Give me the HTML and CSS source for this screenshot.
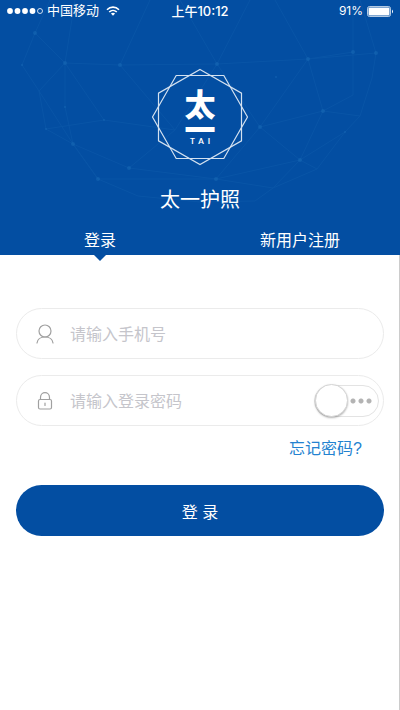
FILE: index.html
```html
<!DOCTYPE html>
<html lang="zh-CN">

<head>
     <meta charset="UTF-8">
     <meta name="viewport" content="width=device-width, initial-scale=1.0">
     <title>太一护照</title>
     <link rel="stylesheet" href="styles.css">
</head>

<body>
     <header class="hero">
          <!-- network globe -->
          <svg class="globe" viewBox="0 0 400 255" preserveAspectRatio="xMidYMid slice" aria-hidden="true">
               <g fill="none" stroke="#1d6db8" stroke-width="1" opacity=".22">
                    <path d="M50 0L35 33L22 65L39 91L46 129L73 144L98 179L138 196L200 202L255 201L273 188L317 169L345 132L360 116L372 78L376 53L360 0" />
                    <path d="M35 33L65 63L120 65L217 64L308 59L376 53M65 63L39 91L73 144L98 179M65 63L104 120L46 129M65 63L75 0M150 0L120 65L175 130M65 63L65 107L73 144L129 168" />
                    <path d="M175 130L217 64L260 127L308 59L323 111L260 127L216 179L129 168L175 130M323 111L360 116M308 59L275 0M308 59L353 52L353 95L323 111L300 160L345 132" />
                    <path d="M98 179L216 179L273 188L300 160L317 169M180 0L217 64L250 0M260 127L300 160L216 179M104 120L175 130M353 52L353 0" />
               </g>
               <g fill="#2378c0" opacity=".35">
                    <circle cx="35" cy="33" r="2" />
                    <circle cx="65" cy="63" r="2" />
                    <circle cx="22" cy="65" r="1" />
                    <circle cx="120" cy="65" r="2" />
                    <circle cx="217" cy="64" r="2" />
                    <circle cx="308" cy="59" r="2" />
                    <circle cx="353" cy="52" r="2" />
                    <circle cx="376" cy="53" r="2" />
                    <circle cx="65" cy="107" r="1" />
                    <circle cx="104" cy="120" r="1" />
                    <circle cx="129" cy="168" r="2" />
                    <circle cx="73" cy="144" r="2" />
                    <circle cx="98" cy="179" r="2" />
                    <circle cx="323" cy="111" r="2" />
                    <circle cx="260" cy="127" r="2" />
                    <circle cx="300" cy="160" r="2" />
                    <circle cx="216" cy="179" r="2" />
                    <circle cx="46" cy="129" r="1" />
                    <circle cx="345" cy="132" r="1" />
                    <circle cx="276" cy="77" r="1" />
               </g>
          </svg>

          <div class="status">
               <div class="status-left">
                    <svg class="signal" width="37" height="8" viewBox="0 0 37 8" aria-hidden="true">
                         <g fill="#fff">
                              <circle cx="4" cy="4" r="2.9" />
                              <circle cx="11.500" cy="4" r="2.9" />
                              <circle cx="19" cy="4" r="2.9" />
                              <circle cx="26.500" cy="4" r="2.9" />
                         </g>
                         <circle cx="34" cy="4" r="2.5" fill="none" stroke="#fff" stroke-width=".8" />
                    </svg>
                    <span>中国移动</span>
                    <svg class="wifi" width="14" height="10" viewBox="0 0 14 10" aria-hidden="true">
                         <path d="M1 3.700C4.400 .3 9.600 .3 13 3.700M3.200 6C5.400 3.900 8.600 3.900 10.800 6" fill="none" stroke="#fff" stroke-width="1.600" />
                         <path d="M4.900 7.600Q7 5.800 9.100 7.600L7 9.800Z" fill="#fff" />
                    </svg>
               </div>
               <div class="status-time">上午10:12</div>
               <div class="status-right">
                    <span>91%</span>
                    <svg width="27" height="11" viewBox="0 0 27 11" aria-hidden="true">
                         <rect x=".5" y=".5" width="23" height="10" rx="2" fill="none" stroke="#fff" stroke-opacity=".7" />
                         <rect x="1.500" y="1.500" width="21" height="8" rx="1" fill="#fff" />
                         <path d="M25 3.500Q27 5.500 25 7.500Z" fill="#fff" />
                    </svg>
               </div>
          </div>

          <div class="brand">
               <svg class="logo" width="98" height="98" viewBox="0 0 98 98" role="img" aria-label="太一 TAI">
                    <g fill="none" stroke="#d3e1f0" stroke-width="1.200">
                         <path d="M49 1.500L90.500 25.200V72.800L49 96.500L7.500 72.800V25.200Z" />
                         <path d="M1.500 49L25.200 7.500H72.800L96.500 49L72.800 90.500H25.200Z" />
                    </g>
                    <text class="logo-name" x="49" y="48">太</text>
                    <text class="logo-name" x="49" y="73">一</text>
                    <text class="logo-latin" x="51" y="76">TAI</text>
               </svg>
               <h1>太一护照</h1>
          </div>

          <nav class="tabs">
               <button class="tab active" type="button">登录</button>
               <button class="tab" type="button">新用户注册</button>
          </nav>
     </header>

     <main class="content">
          <form class="login">
               <div class="field">
                    <label for="phone" aria-label="手机号">
                         <svg width="18" height="20" viewBox="0 0 18 20" fill="none" stroke="#a0a0a0" stroke-width="1.200" stroke-linecap="round">
                              <circle cx="9" cy="7" r="6" />
                              <path d="M1 19C1.500 15.500 4.500 13 9 13S16.500 15.500 17 19" />
                         </svg>
                    </label>
                    <input type="tel" id="phone" placeholder="请输入手机号">
               </div>
               <div class="field">
                    <label for="password" aria-label="登录密码">
                         <svg width="18" height="20" viewBox="0 0 18 20" fill="none" stroke="#a0a0a0" stroke-width="1.200" stroke-linecap="round">
                              <rect x="2.500" y="8.500" width="13" height="9.500" rx="1.500" />
                              <path d="M4.500 8.500V6.500C4.500 0 13.500 0 13.500 6.500V8.500M9 12V14.500" />
                         </svg>
                    </label>
                    <input type="password" id="password" placeholder="请输入登录密码">
                    <input type="checkbox" class="switch" id="showPwd" aria-label="显示密码">
               </div>
               <a class="forgot" href="#">忘记密码?</a>
               <button class="submit" type="submit">登 录</button>
          </form>
     </main>
</body>

</html>
```

FILE: styles.css
```css
* {
     padding: 0;
     margin: 0;
     box-sizing: border-box;
     font-family: "Liberation Sans", "Noto Sans CJK SC", sans-serif;
}

html,
body {
     width: 100%;
     min-height: 100%;
}

body {
     display: flex;
     flex-direction: column;
     min-height: 100vh;
     background: white;
}

button {
     border: none;
     background: transparent;
     color: white;
     font-size: 16px;
     cursor: pointer;
}

.hero {
     position: relative;
     background: #034ea2;
     color: white;
}

/* sits behind the header content */
.globe {
     position: absolute;
     width: 100%;
     height: 100%;
}

.status,
.brand,
.tabs {
     position: relative;
}

.status {
     display: grid;
     grid-template-columns: 1fr auto 1fr;
     align-items: center;
     height: 22px;
     padding: 0 6px;
     font-size: 13px;
     line-height: 22px;
}

.status-left,
.status-right {
     display: flex;
     align-items: center;
     gap: 4px;
}

.status-left .wifi {
     margin-left: 3px;
}

.status-right {
     justify-content: flex-end;
}

.status-time,
.status-right span {
     font-family: Inter, "Noto Sans CJK SC", sans-serif;
}

.status-time {
     font-weight: 500;
}

.status-right span {
     font-size: 12px;
}

.brand {
     display: flex;
     flex-direction: column;
     align-items: center;
     gap: 20px;
     padding-top: 46px;
}

.logo text {
     fill: white;
     text-anchor: middle;
}

.logo .logo-name {
     font-family: "Noto Sans CJK SC", sans-serif;
     font-size: 31px;
     font-weight: 900;
}

.logo .logo-latin {
     font-family: Lato, sans-serif;
     font-size: 8px;
     font-weight: 700;
     letter-spacing: 4px;
}

.brand h1 {
     font-size: 20px;
     font-weight: 400;
     line-height: 28px;
}

.tabs {
     display: flex;
     margin-top: 12px;
}

.tab {
     position: relative;
     flex: 1;
     height: 29px;
     line-height: 28px;
}

.tab.active::after {
     content: "";
     position: absolute;
     left: 50%;
     top: 100%;
     border: 6px solid transparent;
     border-top-color: #034ea2;
     border-bottom: none;
     transform: translateX(-50%);
}

.content {
     flex: 1;
     padding: 53px 15px 40px 16px;
     border-right: 1px solid #ccc;
}

.login {
     display: flex;
     flex-direction: column;
}

.field {
     display: flex;
     align-items: center;
     height: 51px;
     padding: 0 4px 0 19px;
     border: 1px solid #ebebeb;
     border-radius: 26px;
}

.field + .field {
     margin-top: 16px;
}

.field label {
     display: flex;
     margin-right: 16px;
}

.field input {
     flex: 1;
     min-width: 0;
     height: 49px;
     padding-top: 2px;
     border: none;
     outline: none;
     background: transparent;
     color: #333;
     font-size: 16px;
}

.field input::placeholder {
     color: #c5c5cb;
}

.field .switch {
     flex: none;
     display: flex;
     align-items: center;
     width: 65px;
     height: 32px;
     padding: 0;
     border: 1px solid #e3e3e3;
     border-radius: 16px;
     appearance: none;
     cursor: pointer;
}

.switch::before {
     content: "";
     width: 31px;
     height: 31px;
     border: 1px solid #d5d5d5;
     border-radius: 50%;
     background: white;
     box-shadow: 0 1px 2px rgba(0, 0, 0, 0.3);
}

/* three dots of the hidden password */
.switch::after {
     content: "";
     width: 24px;
     height: 8px;
     margin-left: 1px;
     background: radial-gradient(circle, #b3b3b3 2px, transparent 3px) 0 0 / 8px 8px;
}

.forgot {
     align-self: flex-end;
     margin: 11px 22px 0 0;
     color: #2482d0;
     font-size: 16px;
     line-height: 24px;
     text-decoration: none;
}

.submit {
     height: 51px;
     margin-top: 24px;
     border-radius: 26px;
     background: #034ea2;
}
```
